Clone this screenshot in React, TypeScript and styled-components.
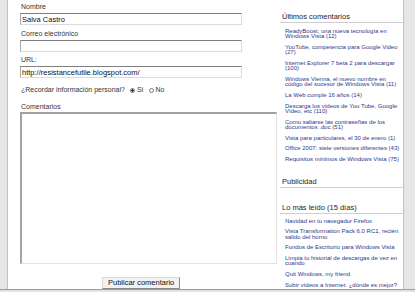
import React from "react";
import styled, { createGlobalStyle } from "styled-components";

const GlobalStyle = createGlobalStyle`
	html, body {
		margin: 0;
		padding: 0;
		background: #e4e4e4;
	}
	* {
		box-sizing: border-box;
	}
`;

const Page = styled.div`
	width: 415px;
	height: 292px;
	display: flex;
	flex-direction: column;
	background: #e4e4e4;
	font-family: "Liberation Sans", Arial, sans-serif;
	overflow: hidden;
`;

const Frame = styled.div`
	display: flex;
	height: 290px;
	flex-shrink: 0;
	border-bottom: 1px solid #9c9c9c;
`;

const Strip = styled.div<{ $side: "left" | "right" }>`
	background: #e6e6e6;
	${(p) => (p.$side === "left" ? "width: 8px; border-right: 1px solid #c2c2c2;" : "flex: 1; border-left: 1px solid #c2c2c2;")}
`;

const Main = styled.div`
	display: flex;
	background: #fff;
	padding-left: 12px;
`;

const Form = styled.form`
	width: 257px;
	padding-top: 3px;
	display: flex;
	flex-direction: column;
`;

const Field = styled.div`
	display: flex;
	flex-direction: column;
	margin-bottom: 4.5px;
`;

const Label = styled.label`
	font-size: 7px;
	line-height: 8px;
	color: #333;
	padding-left: 1px;
	margin-bottom: 2px;
`;

const Input = styled.input`
	width: 222px;
	height: 12px;
	padding: 0 1px;
	font-family: inherit;
	font-size: 7.5px;
	color: #111;
	background: #fff;
	border: 1px solid #dcdcdc;
	border-top-color: #7e7e7e;
	border-left-color: #a8a8a8;
	outline: none;
`;

const RememberRow = styled.div`
	display: flex;
	align-items: center;
	gap: 3px;
	font-size: 7px;
	line-height: 8px;
	color: #333;
	margin-top: 3.5px;
	padding-left: 1px;
`;

const Option = styled.span`
	display: inline-flex;
	align-items: center;
	gap: 2px;
	margin-left: 2px;
`;

const Radio = styled.span<{ $checked?: boolean }>`
	width: 5px;
	height: 5px;
	border-radius: 50%;
	border: 1px solid #777;
	background: ${(p) => (p.$checked ? "radial-gradient(circle, #333 0 1.2px, #fff 1.4px)" : "#fff")};
`;

const CommentLabel = styled(Label)`
	margin-top: 9px;
	margin-bottom: 1px;
`;

const TextArea = styled.textarea`
	width: 257px;
	height: 158px;
	resize: none;
	background: #fff;
	border: 1px solid #e2e2e2;
	border-top: 2px solid #a0a0a0;
	border-left: 2px solid #a4a4a4;
	outline: none;
`;

const ButtonRow = styled.div`
	padding: 7px 0 0 82px;
`;

const Button = styled.button`
	height: 12px;
	padding: 0 5px;
	font-family: inherit;
	font-size: 7.5px;
	line-height: 10px;
	color: #111;
	background: #f2f2f2;
	border: 1px solid #dadada;
	border-right-color: #8a8a8a;
	border-bottom-color: #8a8a8a;
	border-radius: 0;
`;

const Sidebar = styled.aside`
	width: 123px;
	margin-left: 3px;
	padding-top: 12px;
	display: flex;
	flex-direction: column;
`;

const Section = styled.section<{ $minHeight?: number }>`
	flex-shrink: 0;
	margin-bottom: 10px;
	min-height: ${(p) => p.$minHeight ?? 0}px;
`;

const Heading = styled.h2`
	margin: 0;
	font-size: 7.5px;
	font-weight: normal;
	line-height: 10px;
	color: #1e1e1e;
	padding-left: 2px;
	border-bottom: 1px solid #cfcfcf;
`;

const List = styled.ul<{ $top: number }>`
	list-style: none;
	margin: ${(p) => p.$top}px 0 0;
	padding: 0 0 0 5px;
`;

const Item = styled.li`
	font-size: 6px;
	line-height: 5.4px;
	margin-bottom: 5.2px;
	color: #2d3a8c;
`;

const latest = [
	"ReadyBoost, una nueva tecnología en Windows Vista (12)",
	"YouTube, competencia para Google Video (27)",
	"Internet Explorer 7 beta 2 para descargar (100)",
	"Windows Vienna, el nuevo nombre en código del sucesor de Windows Vista (11)",
	"La Web cumple 16 años (14)",
	"Descarga los vídeos de You Tube, Google Vídeo, etc (110)",
	"Como saltarse las contraseñas de los documentos .doc (51)",
	"Vista para particulares, el 30 de enero (1)",
	"Office 2007: siete versiones diferentes (43)",
	"Requisitos mínimos de Windows Vista (75)",
];

const mostRead = [
	"Navidad en tu navegador Firefox",
	"Vista Transformation Pack 6.0 RC1, recién salido del horno",
	"Fondos de Escritorio para Windows Vista",
	"Limpia tu historial de descargas de vez en cuando",
	"Quit Windows, my friend",
	"Subir vídeos a Internet: ¿dónde es mejor?",
];

export default function App() {
	return (
		<Page>
			<GlobalStyle />
			<Frame>
				<Strip $side="left" />
				<Main>
					<Form onSubmit={(e) => e.preventDefault()}>
						<Field>
							<Label>Nombre</Label>
							<Input defaultValue="Salva Castro" />
						</Field>
						<Field>
							<Label>Correo electrónico</Label>
							<Input defaultValue="" />
						</Field>
						<Field>
							<Label>URL:</Label>
							<Input defaultValue="http://resistancefutile.blogspot.com/" />
						</Field>
						<RememberRow>
							¿Recordar información personal?
							<Option>
								<Radio $checked />
								Sí
							</Option>
							<Option>
								<Radio />
								No
							</Option>
						</RememberRow>
						<CommentLabel>Comentarios</CommentLabel>
						<TextArea />
						<ButtonRow>
							<Button type="submit">Publicar comentario</Button>
						</ButtonRow>
					</Form>
					<Sidebar>
						<Section>
							<Heading>Últimos comentarios</Heading>
							<List $top={6}>
								{latest.map((t) => (
									<Item key={t}>{t}</Item>
								))}
							</List>
						</Section>
						<Section $minHeight={16}>
							<Heading>Publicidad</Heading>
						</Section>
						<Section>
							<Heading>Lo más leído (15 días)</Heading>
							<List $top={4.5}>
								{mostRead.map((t) => (
									<Item key={t}>{t}</Item>
								))}
							</List>
						</Section>
					</Sidebar>
				</Main>
				<Strip $side="right" />
			</Frame>
		</Page>
	);
}
